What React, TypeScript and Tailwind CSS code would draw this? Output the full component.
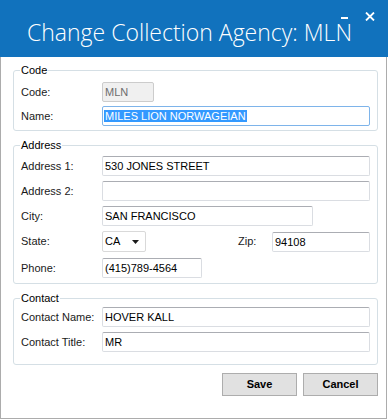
import React from "react";

const inputBase =
	"h-[20px] rounded-[2px] border border-[#dadde2] border-t-[#abadb3] bg-white px-[2px] text-[11px] leading-[18px] text-black";

const Label = ({ children, className = "" }: { children: React.ReactNode; className?: string }) => (
	<span className={`w-[81px] shrink-0 text-[11px] text-[#1a1a1a] ${className}`}>{children}</span>
);

const Row = ({ label, children, className = "" }: { label: string; children: React.ReactNode; className?: string }) => (
	<div className={`flex items-center ${className}`}>
		<Label>{label}</Label>
		{children}
	</div>
);

const Group = ({ title, children, className = "" }: { title: string; children: React.ReactNode; className?: string }) => (
	<fieldset className={`rounded-[3px] border border-[#d5dfe5] px-[7px] ${className}`}>
		<legend className="ml-[-1px] px-[1px] text-[11px] leading-[14px] text-black">{title}</legend>
		{children}
	</fieldset>
);

export default function App() {
	return (
		<div
			className="h-[419px] w-[388px] bg-white"
			style={{ fontFamily: '"Liberation Sans", Arial, sans-serif' }}
		>
			<div className="relative flex h-[57px] items-start bg-[#1172bd] pl-[27px] pt-[17px]">
				<h1
					className="text-[23px] font-light leading-[30px] text-white"
					style={{ fontFamily: '"Open Sans", sans-serif' }}
				>
					Change Collection Agency: MLN
				</h1>
				<span className="absolute left-[341px] top-[17px] h-[2px] w-[7px] bg-white" />
				<svg className="absolute left-[365px] top-[12px]" width="10" height="9" viewBox="0 0 10 9">
					<path d="M1 0.5 L9 8.5 M9 0.5 L1 8.5" stroke="white" strokeWidth="1.8" />
				</svg>
			</div>
			<div className="h-[362px] w-[387px] border-x border-b border-[#acacac] pl-[12px] pr-[8px] pt-[6px]">
				<Group title="Code" className="pb-[4px] pt-[5px]">
					<Row label="Code:">
						<div className="h-[20px] w-[52px] rounded-[2px] border border-[#cccccc] bg-[#f0f0f0] px-[2px] text-[11px] leading-[18px] text-[#6d6d6d]">
							MLN
						</div>
					</Row>
					<Row label="Name:" className="mt-[4px]">
						<div className="h-[20px] flex-1 rounded-[2px] border border-[#7eb4ea] bg-white px-[1px] pt-[1px] text-[11px] leading-[16px]">
							<span className="bg-[#3399ff] px-[1px] text-white">MILES LION NORWAGEIAN</span>
						</div>
					</Row>
				</Group>

				<Group title="Address" className="mt-[7px] pb-[5px] pt-[4px]">
					<Row label="Address 1:">
						<div className={`${inputBase} flex-1`}>530 JONES STREET</div>
					</Row>
					<Row label="Address 2:" className="mt-[5px]">
						<div className={`${inputBase} flex-1`} />
					</Row>
					<Row label="City:" className="mt-[5px]">
						<div className={`${inputBase} w-[211px]`}>SAN FRANCISCO</div>
					</Row>
					<div className="mt-[5px] flex items-center">
						<Label>State:</Label>
						<div className="flex h-[21px] w-[44px] items-center justify-between rounded-[2px] border border-[#d9d9d9] bg-white pl-[2px] pr-[6px] text-[11px]">
							<span>CA</span>
							<svg width="7" height="4" viewBox="0 0 7 4">
								<path d="M0 0 H7 L3.5 4 Z" fill="#1a1a1a" />
							</svg>
						</div>
						<span className="ml-[92px] w-[34px] text-[11px] text-[#1a1a1a]">Zip:</span>
						<div className={`${inputBase} flex-1`}>94108</div>
					</div>
					<Row label="Phone:" className="mt-[6px]">
						<div className={`${inputBase} w-[100px]`}>(415)789-4564</div>
					</Row>
				</Group>

				<Group title="Contact" className="mt-[7px] pb-[12px] pt-[2px]">
					<Row label="Contact Name:">
						<div className={`${inputBase} flex-1`}>HOVER KALL</div>
					</Row>
					<Row label="Contact Title:" className="mt-[5px]">
						<div className={`${inputBase} flex-1`}>MR</div>
					</Row>
				</Group>

				<div className="mt-[8px] flex justify-end gap-[6px]">
					<button className="h-[23px] w-[75px] border border-[#adadad] bg-[#e1e1e1] text-[11px] font-bold text-black">
						Save
					</button>
					<button className="h-[23px] w-[75px] border border-[#adadad] bg-[#e1e1e1] text-[11px] font-bold text-black">
						Cancel
					</button>
				</div>
			</div>
		</div>
	);
}
